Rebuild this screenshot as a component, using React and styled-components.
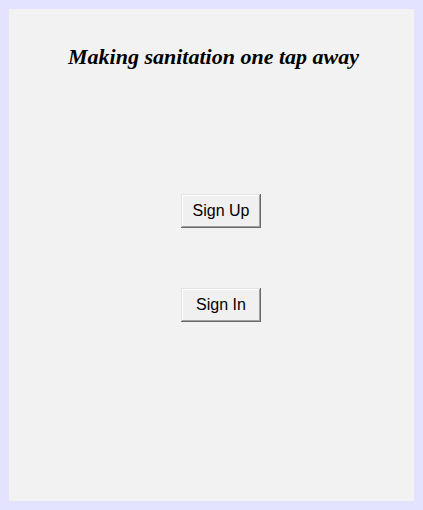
import React from "react";
import styled, { createGlobalStyle } from "styled-components";

const Global = createGlobalStyle`
  html, body { margin: 0; padding: 0; background: #e3e3ff; }
  #root { width: 423px; height: 510px; }
`;

const Frame = styled.div`
  box-sizing: border-box;
  width: 423px;
  height: 510px;
  padding: 9px 9px 9px 9px;
  background: #e3e3ff;
  display: flex;
`;

const Panel = styled.div`
  flex: 1;
  background: #f2f2f2;
  display: flex;
  flex-direction: column;
  align-items: center;
`;

const Title = styled.h1`
  margin: 35px 0 0 4px;
  font-family: "Liberation Serif", "Times New Roman", serif;
  font-style: italic;
  font-weight: bold;
  font-size: 22px;
  line-height: 26px;
  color: #000;
`;

const Actions = styled.div`
  display: flex;
  flex-direction: column;
  align-items: center;
  gap: 60px;
  margin-top: 124px;
  padding-left: 19px;
`;

const Button = styled.button`
  box-sizing: border-box;
  width: 80px;
  height: 34px;
  padding: 0;
  border: none;
  background: #f0f0f0;
  font-family: "Liberation Sans", Arial, sans-serif;
  font-size: 16px;
  color: #000;
  box-shadow: inset -1px -1px #696969, inset 1px 1px #e3e3e3,
    inset -2px -2px #a0a0a0, inset 2px 2px #ffffff;
  cursor: pointer;
`;

export default function App() {
  return (
    <>
      <Global />
      <Frame>
        <Panel>
          <Title>Making sanitation one tap away</Title>
          <Actions>
            <Button>Sign Up</Button>
            <Button>Sign In</Button>
          </Actions>
        </Panel>
      </Frame>
    </>
  );
}
